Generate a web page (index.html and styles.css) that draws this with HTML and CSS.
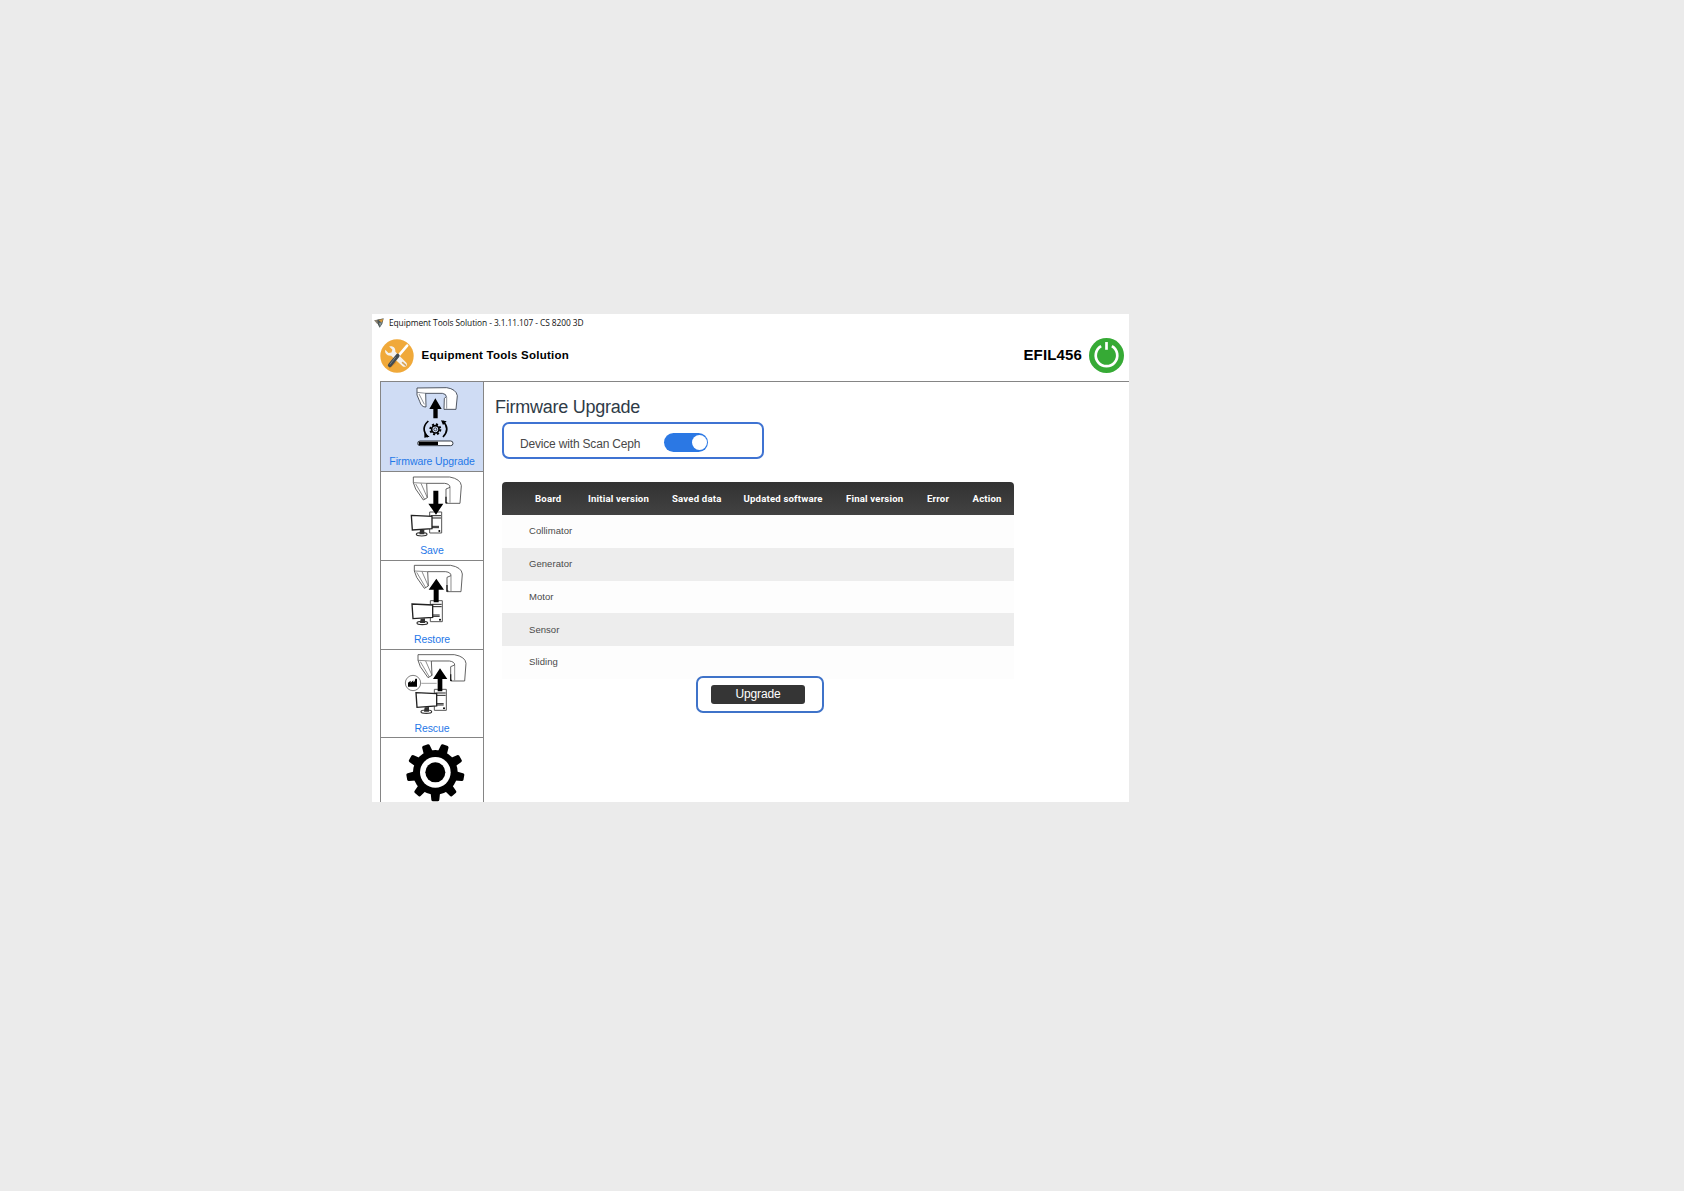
FILE: index.html
```html
<!DOCTYPE html>
<html lang="en">
<head>
<meta charset="utf-8">
<title>Equipment Tools Solution</title>
<link rel="stylesheet" href="styles.css">
</head>
<body>
<main class="window">
  <div class="titlebar">
    <svg class="app-mark" viewBox="0 0 30 30"><path d="M0 7 17 4 16 19 9 17Z" fill="#8b8171"/><path d="M10 5 29 1 25 17 17 29 12 20Z" fill="#4d5654"/><path d="M14 6 28 3 23 14Z" fill="#d99a3b"/><path d="M15 15 24 13 18 26Z" fill="#87979b"/></svg>
    <span class="titlebar-text">Equipment Tools Solution - 3.1.11.107 - CS 8200 3D</span>
  </div>
  <header class="header">
    <svg class="logo" viewBox="0 0 104 104">
      <circle cx="52" cy="52" r="51" fill="#f0a93a"/>
      <path d="M28 88 44 67 50 73 29 91Z" fill="#d78d2b"/>
      <path d="M83 20 55 53" stroke="#fff" stroke-width="8" stroke-linecap="round"/>
      <path d="M28 23 38 33 35 41 26 43 16 33C14 43 20 52 34 51L70 84C80 88 86 79 80 72L47 39C48 27 40 20 28 23Z" fill="#f5f2ec"/>
      <path d="M69 72 78 80" stroke="#d7a257" stroke-width="5" stroke-linecap="round"/>
      <path d="M54 51 30 80" stroke="#424b50" stroke-width="12" stroke-linecap="round"/>
      <path d="M48 55 30 78" stroke="#929a9e" stroke-width="2"/>
    </svg>
    <h1 class="product">Equipment Tools Solution</h1>
    <span class="serial">EFIL456</span>
    <svg class="power" viewBox="0 0 104 104">
      <circle cx="52" cy="52" r="52" fill="#36aa35"/>
      <path d="M36 24A32 32 0 1 0 68 24" fill="none" stroke="#fff" stroke-width="8"/>
      <path d="M52 12V35" stroke="#fff" stroke-width="8"/>
    </svg>
  </header>
  <div class="body">
    <nav class="sidebar">
      <a class="item active">
        <svg viewBox="33 21 306 220">
          <path d="M141 39 230 38Q258 42 262 62L258 103H222L223 70 229 65Q229 57 217 55H167L168 96Q154 97 149 79L141 60Z" fill="#fff" stroke="#343a44" stroke-width="2.5"/>
          <path d="M141 52 168 55M147 57 163 88M230 66V101" fill="none" stroke="#555b66" stroke-width="2"/>
          <path d="M196 70 215 102H203V130H190V102H178Z"/>
          <path d="M175 138Q150 161 174 186M218 138Q242 161 219 186" fill="none" stroke="#000" stroke-width="5"/>
          <path d="M213 136 230 139 219 150ZM163 174 179 185 163 188Z"/>
          <circle cx="196" cy="163" r="15" fill="none" stroke="#000" stroke-width="6" stroke-dasharray="6.1 5.68"/>
          <circle cx="196" cy="163" r="11" fill="none" stroke="#000" stroke-width="5"/><circle cx="196" cy="163" r="4.5" fill="none" stroke="#000" stroke-width="2"/>
          <rect x="143" y="198" width="106" height="14" rx="7" fill="#fff" stroke="#343a44" stroke-width="3"/>
          <path d="M146 200H204V210H146Z"/>
        </svg>
        <span class="label">Firmware Upgrade</span>
      </a>
      <a class="item">
        <svg viewBox="33 20 306 220">
          <g id="scanner"><path d="M130 35H239Q272 41 274 61L270 114H228V71L240 66Q240 56 224 54H170L172 97 160 104 137 71 130 52Z" fill="#fff" stroke="#444" stroke-width="2.5"/><path d="M130 52 170 54M137 56 164 102M153 54 172 97M240 66V112" fill="none" stroke="#555" stroke-width="2"/><path d="M228 94V112H232" fill="none" stroke="#222" stroke-width="4"/></g>
          <g id="computer"><path d="M179 140H215V203H179Z" fill="#fff" stroke="#555" stroke-width="3"/><path d="M182 151H213M182 158H213M185 183H207M185 187H207" stroke="#222" stroke-width="3"/><circle cx="208" cy="197" r="3"/><path d="M124 150 186 153V190L127 194Z" fill="#fff" stroke="#222" stroke-width="4"/><ellipse cx="155" cy="207" rx="16" ry="5" fill="#fff" stroke="#333" stroke-width="3.5"/><path d="M150 194 148 207H163V193Z" fill="#333"/></g>
          <path d="M190 76H205V115H220L198 148 175 115H190Z"/>
        </svg>
        <span class="label">Save</span>
      </a>
      <a class="item">
        <svg viewBox="33 18 306 220">
          <use href="#scanner" x="3" y="-4"/>
          <use href="#computer" x="2" y="-3"/>
          <path d="M199 71 222 104H206V142H191V104H176Z"/>
        </svg>
        <span class="label">Restore</span>
      </a>
      <a class="item short">
        <svg viewBox="33 15 306 220">
          <use href="#scanner" x="14" y="-6"/>
          <use href="#computer" x="14" y="-7"/>
          <path d="M154 115H200" stroke="#777" stroke-width="2"/>
          <circle cx="129" cy="114" r="23" fill="#fff" stroke="#666" stroke-width="2.5"/>
          <path d="M114 125V113L122 107V113L130 106V112L134 109 136 101H141V125Z"/>
          <path d="M210 70 232 102H217V139H203V102H189Z"/>
        </svg>
        <span class="label">Rescue</span>
      </a>
      <a class="item last">
        <svg class="gear" viewBox="33 279 306 192">
          <path id="tooth" d="M181 330 184 300Q184 296 188 295H204Q208 296 208 300L211 330Z" transform="rotate(20 196 382)"/>
          <use href="#tooth" transform="rotate(40 196 382)"/><use href="#tooth" transform="rotate(80 196 382)"/><use href="#tooth" transform="rotate(120 196 382)"/><use href="#tooth" transform="rotate(160 196 382)"/><use href="#tooth" transform="rotate(200 196 382)"/><use href="#tooth" transform="rotate(240 196 382)"/><use href="#tooth" transform="rotate(280 196 382)"/><use href="#tooth" transform="rotate(320 196 382)"/>
          <circle cx="196" cy="382" r="67"/><circle cx="196" cy="382" r="46" fill="#fff"/><circle cx="196" cy="382" r="30"/>
        </svg>
      </a>
    </nav>
    <section class="content">
      <h2 class="heading">Firmware Upgrade</h2>
      <div class="option"><span class="option-text">Device with Scan Ceph</span><span class="toggle"><span class="knob"></span></span></div>
      <table class="boards">
        <thead><tr><th>Board</th><th>Initial version</th><th>Saved data</th><th>Updated software</th><th>Final version</th><th>Error</th><th>Action</th></tr></thead>
        <tbody>
          <tr><td>Collimator</td></tr>
          <tr><td>Generator</td></tr>
          <tr><td>Motor</td></tr>
          <tr><td>Sensor</td></tr>
          <tr><td>Sliding</td></tr>
        </tbody>
      </table>
      <div class="action"><button class="upgrade">Upgrade</button></div>
    </section>
  </div>
</main>
</body>
</html>
```
FILE: styles.css
```css
* { box-sizing: border-box; }
body { margin: 0; background: #ebebeb; font-family: "Liberation Sans", Arial, sans-serif; }
.window { width: 757px; height: 488px; margin: 314px 0 0 372px; background: #fff; overflow: hidden; display: flex; flex-direction: column; }
.titlebar { height: 18px; padding-left: 2px; display: flex; align-items: center; flex: none; }
.app-mark { width: 10px; height: 10px; margin-right: 5px; }
.titlebar-text { font: 8.4px/18px "Open Sans", sans-serif; letter-spacing: -0.08px; color: #111; white-space: nowrap; }
.header { height: 49px; flex: none; display: flex; align-items: center; padding: 0 5px 2px 8px; }
.logo { width: 34px; height: 34px; }
.product { margin: 0 auto 0 7.5px; padding-bottom: 1px; font-size: 11.5px; line-height: 16px; letter-spacing: 0.25px; color: #000; white-space: nowrap; }
.serial { font-size: 15px; line-height: 17px; padding-bottom: 2px; font-weight: bold; letter-spacing: 0.15px; color: #000; margin-right: 7px; }
.power { width: 35px; height: 35px; }
.body { flex: 1; min-height: 0; margin-left: 8px; display: flex; border-top: 1px solid #858585; }
.sidebar { width: 104px; flex: none; border: solid #858585; border-width: 0 1px; display: flex; flex-direction: column; }
.item { height: 89px; flex: none; border-bottom: 1px solid #858585; display: flex; flex-direction: column; align-items: center; }
.item svg { display: block; width: 102px; height: 73.33px; flex: none; }
.item.active { height: 90px; background: #cfdcf4; }
.item.short { height: 88px; }
.item.last { height: 65px; border: 0; }
.item .gear { height: 64px; }
.label { margin-top: -1px; font-size: 10.5px; line-height: 12px; letter-spacing: -0.1px; color: #1f78e8; white-space: nowrap; }
.active .label { margin-top: 0; }
.content { flex: 1; padding: 15px 0 0 18px; }
.heading { margin: 0 0 5px -7px; font-size: 18px; line-height: 20px; font-weight: normal; letter-spacing: -0.25px; color: #2f3b47; white-space: nowrap; }
.option { width: 262px; height: 37px; border: 2px solid #3f73d2; border-radius: 7px; display: flex; align-items: center; padding: 3px 0 0 16px; }
.option-text { width: 144px; font-size: 12px; letter-spacing: -0.18px; color: #484848; white-space: nowrap; padding-top: 3px; }
.toggle { width: 43.5px; height: 19px; border-radius: 10px; background: #2b78e4; display: flex; justify-content: flex-end; align-items: center; padding-right: 1px; }
.knob { width: 15px; height: 15px; border-radius: 50%; background: #fff; }
.boards { display: block; width: 511.5px; margin-top: 23px; }
.boards thead, .boards tbody { display: block; }
.boards tr { height: 32.75px; display: grid; align-items: center; }
.boards thead tr { height: 33px; grid-template-columns: 53px 84px 71.5px 102.5px 81px 45.5px auto; padding-left: 33px; background: linear-gradient(#323232, #424242); border-radius: 4px 4px 0 0; }
.boards th { padding: 0; text-align: left; font: bold 9.6px/12px Roboto, sans-serif; letter-spacing: 0.18px; color: #fff; white-space: nowrap; }
.boards td { padding: 0 0 0.2px 27px; font-size: 9.5px; line-height: 12px; letter-spacing: 0.05px; color: #4a4a4a; }
.boards tbody tr { background: #fdfdfd; }
.boards tbody tr:nth-child(even) { background: #ededed; }
.action { width: 128px; height: 37px; margin: -2.75px 0 0 194px; position: relative; background: #fff; border: 2px solid #3f73c9; border-radius: 7px; padding: 7px 0 0 13px; }
.upgrade { display: block; width: 94px; height: 19px; border: 0; border-radius: 3px; padding: 0 0 1px; background: #353535; color: #fff; font: 12px/18px "Liberation Sans", Arial, sans-serif; letter-spacing: -0.15px; }
```
